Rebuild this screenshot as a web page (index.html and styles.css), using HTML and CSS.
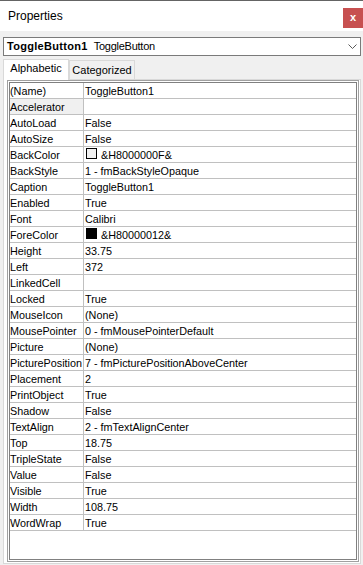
FILE: index.html
```html
<!DOCTYPE html>
<html>
<head>
<meta charset="utf-8">
<link rel="stylesheet" href="styles.css">
</head>
<body>
<div class="window">
  <div class="titlebar">
    <div class="title">Properties</div>
    <div class="close">x</div>
  </div>
  <div class="content">
    <div class="combo">
      <span class="cb">ToggleButton1</span><span class="cn">ToggleButton</span>
      <svg class="chev" width="9" height="5" viewBox="0 0 9 5"><polyline points="0.5,0.5 4.5,4.5 8.5,0.5" fill="none" stroke="#5a5a5a" stroke-width="1"/></svg>
    </div>
    <div class="tabs">
      <div class="tab active">Alphabetic</div>
      <div class="tab">Categorized</div>
    </div>
    <div class="panel">
      <div class="grid">
        <div class="gridin">
          <div class="row"><div class="k">(Name)</div><div class="v">ToggleButton1</div></div>
          <div class="row"><div class="k sel">Accelerator</div><div class="v"></div></div>
          <div class="row"><div class="k">AutoLoad</div><div class="v">False</div></div>
          <div class="row"><div class="k">AutoSize</div><div class="v">False</div></div>
          <div class="row"><div class="k">BackColor</div><div class="v"><span class="sw sw-light"></span>&amp;H8000000F&amp;</div></div>
          <div class="row"><div class="k">BackStyle</div><div class="v">1 - fmBackStyleOpaque</div></div>
          <div class="row"><div class="k">Caption</div><div class="v">ToggleButton1</div></div>
          <div class="row"><div class="k">Enabled</div><div class="v">True</div></div>
          <div class="row"><div class="k">Font</div><div class="v">Calibri</div></div>
          <div class="row"><div class="k">ForeColor</div><div class="v"><span class="sw sw-dark"></span>&amp;H80000012&amp;</div></div>
          <div class="row"><div class="k">Height</div><div class="v">33.75</div></div>
          <div class="row"><div class="k">Left</div><div class="v">372</div></div>
          <div class="row"><div class="k">LinkedCell</div><div class="v"></div></div>
          <div class="row"><div class="k">Locked</div><div class="v">True</div></div>
          <div class="row"><div class="k">MouseIcon</div><div class="v">(None)</div></div>
          <div class="row"><div class="k">MousePointer</div><div class="v">0 - fmMousePointerDefault</div></div>
          <div class="row"><div class="k">Picture</div><div class="v">(None)</div></div>
          <div class="row"><div class="k">PicturePosition</div><div class="v">7 - fmPicturePositionAboveCenter</div></div>
          <div class="row"><div class="k">Placement</div><div class="v">2</div></div>
          <div class="row"><div class="k">PrintObject</div><div class="v">True</div></div>
          <div class="row"><div class="k">Shadow</div><div class="v">False</div></div>
          <div class="row"><div class="k">TextAlign</div><div class="v">2 - fmTextAlignCenter</div></div>
          <div class="row"><div class="k">Top</div><div class="v">18.75</div></div>
          <div class="row"><div class="k">TripleState</div><div class="v">False</div></div>
          <div class="row"><div class="k">Value</div><div class="v">False</div></div>
          <div class="row"><div class="k">Visible</div><div class="v">True</div></div>
          <div class="row"><div class="k">Width</div><div class="v">108.75</div></div>
          <div class="row"><div class="k">WordWrap</div><div class="v">True</div></div>
        </div>
      </div>
    </div>
  </div>
</div>
</body>
</html>
```
FILE: styles.css
```css
* { box-sizing: border-box; }
html, body { margin: 0; padding: 0; }
body {
  background: #f0f0f0;
  font-family: "Liberation Sans", Arial, sans-serif;
  color: #000;
  width: 363px;
  height: 565px;
  overflow: hidden;
}
.window {
  display: flex;
  flex-direction: column;
  height: 565px;
}
.titlebar {
  height: 31px;
  background: #fff;
  border-top: 1px solid #646464;
  display: flex;
  justify-content: space-between;
  align-items: flex-start;
  flex: none;
}
.title {
  padding: 7px 0 0 8px;
  font-size: 12px;
  line-height: 16px;
}
.close {
  width: 20px;
  height: 20px;
  margin-top: 7px;
  background: #c75050;
  color: #fff;
  font-weight: bold;
  font-size: 11px;
  line-height: 18px;
  text-align: center;
}
.content {
  flex: 1;
  display: flex;
  flex-direction: column;
  padding: 6px 2px 1px 3px;
}
.combo {
  flex: none;
  height: 19px;
  background: #fff;
  border: 1px solid #7a7a7a;
  display: flex;
  align-items: center;
  padding-left: 3px;
  font-size: 11px;
  line-height: 17px;
  white-space: nowrap;
}
.cb { font-weight: bold; letter-spacing: 0.3px; }
.cn { margin-left: 6px; letter-spacing: -0.25px; }
.chev { margin-left: auto; margin-right: 3px; display: block; }
.tabs {
  flex: none;
  display: flex;
  align-items: flex-end;
  margin-top: 3px;
  height: 20px;
}
.tab {
  width: 66px;
  height: 19px;
  background: #f0f0f0;
  border: 1px solid #d9d9d9;
  border-bottom: none;
  padding-top: 1px;
  font-size: 11px;
  line-height: 16px;
  text-align: center;
  white-space: nowrap;
}
.tab.active {
  height: 21px;
  margin-bottom: -1px;
  padding-top: 0;
  background: #fff;
  position: relative;
  z-index: 1;
}
.panel {
  flex: 1;
  display: flex;
  flex-direction: column;
  background: #fff;
  border: 1px solid #d9d9d9;
  padding: 0 1px 1px 3px;
}
.grid {
  flex: 1;
  display: flex;
  flex-direction: column;
  border: 1px solid #a0a0a0;
  padding: 1px;
  background: #fff;
}
.gridin {
  flex: 1;
  border: 1px solid #808080;
  background: #fff;
  font-size: 10.8px;
}
.row {
  display: flex;
  height: 16px;
  border-bottom: 1px solid #c0c0c0;
}
.k, .v {
  padding-top: 1px;
  line-height: 14px;
  white-space: nowrap;
  overflow: hidden;
}
.k {
  width: 74px;
  flex: none;
  border-right: 1px solid #c0c0c0;
}
.k.sel { background: #f0f0f0; }
.v {
  flex: 1;
  padding-left: 1px;
  display: flex;
  align-items: flex-start;
}
.sw {
  width: 11px;
  height: 11px;
  margin: 0 4px 0 1px;
  border: 1px solid #000;
  flex: none;
}
.sw-light { background: #f0f0f0; }
.sw-dark { background: #000; }
```
